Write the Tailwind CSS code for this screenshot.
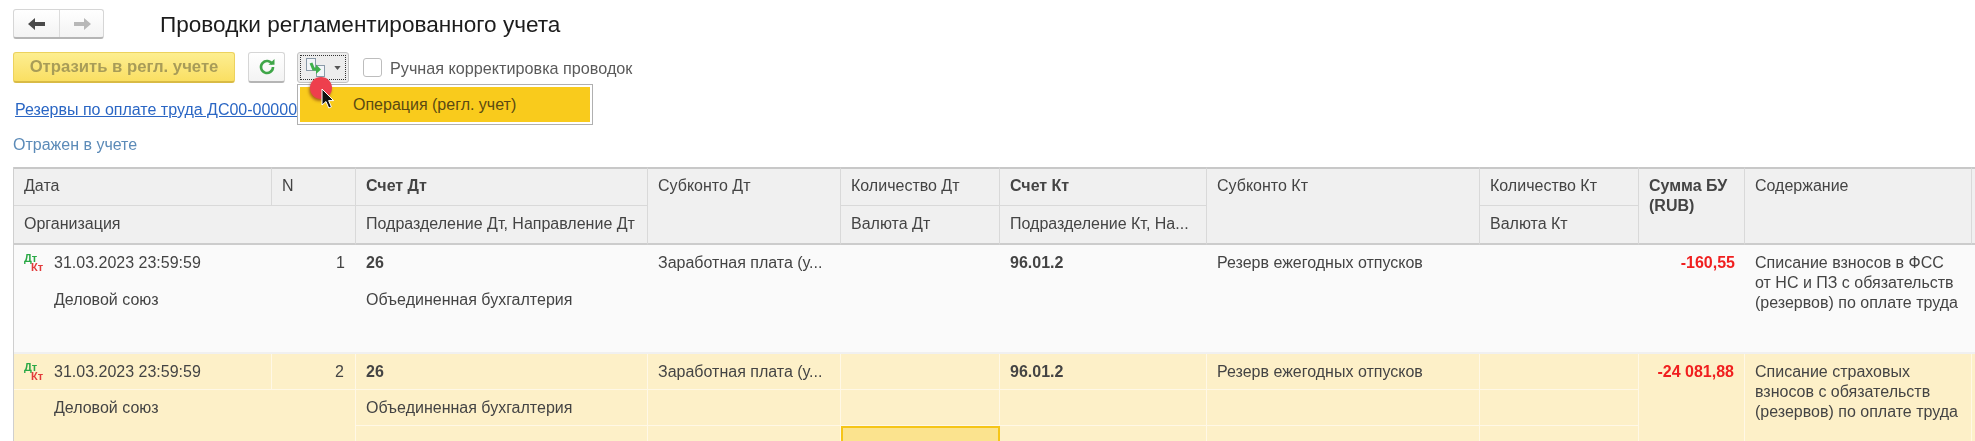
<!DOCTYPE html>
<html lang="ru"><head><meta charset="utf-8"><script src="https://cdn.jsdelivr.net/npm/@tailwindcss/browser@4"></script></head>
<body class="bg-white">
<div class="relative w-[1975px] h-[441px] overflow-hidden font-['Liberation_Sans',Arial,sans-serif] text-[16px] leading-[20px] text-[#444] blur-[0.5px]">
  <div class="flex items-center h-[30px] mt-[9px] ml-[13px]">
    <div class="flex w-[91px] h-[30px] rounded-[3px] border border-[#d6d6d6] border-b-2 border-b-[#b5b5b5] bg-gradient-to-b from-white to-[#f3f3f3]">
      <div class="w-[46px] flex items-center justify-center border-r border-[#dcdcdc]">
        <svg width="18" height="14" viewBox="0 0 18 14"><path d="M0 7l7-6v4h10v4H7v4z" fill="#4a4a4a"/></svg>
      </div>
      <div class="flex-1 flex items-center justify-center">
        <svg width="18" height="14" viewBox="0 0 18 14"><path d="M18 7l-7-6v4H1v4h10v4z" fill="#b8b8b8"/></svg>
      </div>
    </div>
    <div class="ml-[56px] mt-[2px] text-[22.6px] leading-[30px] text-[#1c1c1c] whitespace-nowrap">Проводки регламентированного учета</div>
  </div>
  <div class="flex items-center h-[31px] mt-[13px] ml-[13px]">
    <div class="w-[222px] h-[31px] rounded-[3px] border border-[#ecd25e] border-b-2 border-b-[#d9bb45] bg-gradient-to-b from-[#fdee90] to-[#fadf62] flex items-center justify-center font-bold text-[16.7px] text-[#a89c58] whitespace-nowrap">Отразить в регл. учете</div>
    <div class="ml-[13px] w-[37px] h-[31px] rounded-[3px] border border-[#d6d6d6] border-b-2 border-b-[#b5b5b5] bg-gradient-to-b from-white to-[#f3f3f3] flex items-center justify-center">
      <svg width="18" height="18" viewBox="0 0 18 18" fill="none"><path d="M14.3 6.2A6 6 0 1 0 15 9" stroke="#3fa648" stroke-width="2.6"/><path d="M10.5 6.8h6V1z" fill="#3fa648"/></svg>
    </div>
    <div class="ml-[12px] w-[52px] h-[31px] rounded-[3px] border border-[#c4c4c4] bg-[#ededed] p-[2px]">
      <div class="w-full h-full border border-dotted border-[#333] flex items-center pl-[4px] gap-[8px]">
        <svg width="21" height="19" viewBox="0 0 21 19" fill="none"><rect x="1.5" y="0.5" width="9" height="12" fill="#f2f5f8" stroke="#8a9aa8"/><rect x="11.5" y="7.5" width="8" height="11" fill="#f2f5f8" stroke="#8a9aa8"/><path d="M6 5l2.500 6h4" stroke="#3fb04a" stroke-width="3"/><path d="M11 6.500l5 5-5 4.500z" fill="#3fb04a"/></svg>
        <svg width="7" height="4" viewBox="0 0 8 5"><path d="M0 0h8L4 5z" fill="#555"/></svg>
      </div>
    </div>
    <div class="ml-[14px] w-[19px] h-[19px] rounded-[3px] border border-[#bdbdbd] bg-white"></div>
    <div class="ml-[8px] text-[16.2px] text-[#5a5a5a] whitespace-nowrap">Ручная корректировка проводок</div>
  </div>
  <div class="h-[19px] mt-[17px] ml-[15px] text-[16px] leading-[19px] text-[#2a66c4] underline whitespace-nowrap">Резервы по оплате труда ДС00-00000</div>
  <div class="h-[19px] mt-[16px] ml-[13px] text-[16px] leading-[19px] text-[#5c8bb8] whitespace-nowrap">Отражен в учете</div>

  <div class="mt-[13px] ml-[13px] border-l border-[#cfcfcf] grid grid-cols-[258px_84px_292px_193px_159px_207px_273px_159px_106px_227px_4px] grid-rows-[39px_39px_109px_36px_36px_20px] w-[1962px]">
    <!-- header -->
    <div class="bg-[#f0f0f0] border-t-2 border-t-[#c8c8c8] border-r border-b border-[#d9d9d9] px-[10px] pt-[7px]">Дата</div>
    <div class="bg-[#f0f0f0] border-t-2 border-t-[#c8c8c8] border-r border-b border-[#d9d9d9] px-[10px] pt-[7px]">N</div>
    <div class="bg-[#f0f0f0] border-t-2 border-t-[#c8c8c8] border-r border-b border-[#d9d9d9] px-[10px] pt-[7px] font-bold">Счет Дт</div>
    <div class="row-span-2 bg-[#f0f0f0] border-t-2 border-t-[#c8c8c8] border-r border-b-2 border-[#d9d9d9] border-b-[#cccccc] px-[10px] pt-[7px]">Субконто Дт</div>
    <div class="bg-[#f0f0f0] border-t-2 border-t-[#c8c8c8] border-r border-b border-[#d9d9d9] px-[10px] pt-[7px]">Количество Дт</div>
    <div class="bg-[#f0f0f0] border-t-2 border-t-[#c8c8c8] border-r border-b border-[#d9d9d9] px-[10px] pt-[7px] font-bold">Счет Кт</div>
    <div class="row-span-2 bg-[#f0f0f0] border-t-2 border-t-[#c8c8c8] border-r border-b-2 border-[#d9d9d9] border-b-[#cccccc] px-[10px] pt-[7px]">Субконто Кт</div>
    <div class="bg-[#f0f0f0] border-t-2 border-t-[#c8c8c8] border-r border-b border-[#d9d9d9] px-[10px] pt-[7px]">Количество Кт</div>
    <div class="row-span-2 bg-[#f0f0f0] border-t-2 border-t-[#c8c8c8] border-r border-b-2 border-[#d9d9d9] border-b-[#cccccc] px-[10px] pt-[7px] font-bold">Сумма БУ<br>(RUB)</div>
    <div class="row-span-2 bg-[#f0f0f0] border-t-2 border-t-[#c8c8c8] border-r border-b-2 border-[#d9d9d9] border-b-[#cccccc] px-[10px] pt-[7px]">Содержание</div>
    <div class="row-span-2 bg-[#f0f0f0] border-t-2 border-t-[#c8c8c8] border-b-2 border-b-[#cccccc]"></div>

    <div class="col-span-2 bg-[#f0f0f0] border-r border-b-2 border-[#d9d9d9] border-b-[#cccccc] px-[10px] pt-[8px]">Организация</div>
    <div class="bg-[#f0f0f0] border-r border-b-2 border-[#d9d9d9] border-b-[#cccccc] px-[10px] pt-[8px] whitespace-nowrap">Подразделение Дт, Направление Дт</div>
    <div class="bg-[#f0f0f0] border-r border-b-2 border-[#d9d9d9] border-b-[#cccccc] px-[10px] pt-[8px]">Валюта Дт</div>
    <div class="bg-[#f0f0f0] border-r border-b-2 border-[#d9d9d9] border-b-[#cccccc] px-[10px] pt-[8px] whitespace-nowrap">Подразделение Кт, На...</div>
    <div class="bg-[#f0f0f0] border-r border-b-2 border-[#d9d9d9] border-b-[#cccccc] px-[10px] pt-[8px]">Валюта Кт</div>

    <!-- row 1 -->
    <div class="col-span-2 bg-[#fafafa] border-b-2 border-b-[#f0f0f0] pl-[10px] pr-[11px] pt-[8px]">
      <div class="flex items-start">
        <div class="relative w-[20px] h-[20px] shrink-0 font-bold text-[11px] leading-[11px]"><span class="absolute left-0 top-0 text-[#2aa845]">Дт</span><span class="absolute left-[7px] top-[9px] text-[#e23a3a]">Кт</span></div>
        <span class="ml-[10px]">31.03.2023 23:59:59</span>
        <span class="ml-auto">1</span>
      </div>
      <div class="ml-[30px] mt-[17px]">Деловой союз</div>
    </div>
    <div class="bg-[#fafafa] border-b-2 border-b-[#f0f0f0] px-[10px] pt-[8px]">
      <div class="font-bold">26</div>
      <div class="mt-[17px]">Объединенная бухгалтерия</div>
    </div>
    <div class="bg-[#fafafa] border-b-2 border-b-[#f0f0f0] px-[10px] pt-[8px] whitespace-nowrap">Заработная плата (у...</div>
    <div class="bg-[#fafafa] border-b-2 border-b-[#f0f0f0]"></div>
    <div class="bg-[#fafafa] border-b-2 border-b-[#f0f0f0] px-[10px] pt-[8px] font-bold">96.01.2</div>
    <div class="bg-[#fafafa] border-b-2 border-b-[#f0f0f0] px-[10px] pt-[8px] whitespace-nowrap">Резерв ежегодных отпусков</div>
    <div class="bg-[#fafafa] border-b-2 border-b-[#f0f0f0]"></div>
    <div class="bg-[#fafafa] border-b-2 border-b-[#f0f0f0] px-[10px] pt-[8px] text-right font-bold text-[#f01f1f]">-160,55</div>
    <div class="bg-[#fafafa] border-b-2 border-b-[#f0f0f0] px-[10px] pt-[8px] whitespace-nowrap">Списание взносов в ФСС<br>от НС и ПЗ с обязательств<br>(резервов) по оплате труда</div>
    <div class="bg-[#fafafa] border-b-2 border-b-[#f0f0f0]"></div>

    <!-- row 2 -->
    <div class="bg-[#fdf0c8] border-r border-b border-[#fff8e6] pl-[10px] pt-[8px]">
      <div class="flex items-start">
        <div class="relative w-[20px] h-[20px] shrink-0 font-bold text-[11px] leading-[11px]"><span class="absolute left-0 top-0 text-[#2aa845]">Дт</span><span class="absolute left-[7px] top-[9px] text-[#e23a3a]">Кт</span></div>
        <span class="ml-[10px] whitespace-nowrap">31.03.2023 23:59:59</span>
      </div>
    </div>
    <div class="bg-[#fdf0c8] border-r border-b border-[#fff8e6] pr-[11px] pt-[8px] text-right">2</div>
    <div class="bg-[#fdf0c8] border-r border-b border-[#fff8e6] px-[10px] pt-[8px] font-bold">26</div>
    <div class="bg-[#fdf0c8] border-r border-b border-[#fff8e6] px-[10px] pt-[8px] whitespace-nowrap">Заработная плата (у...</div>
    <div class="bg-[#fdf0c8] border-r border-b border-[#fff8e6]"></div>
    <div class="bg-[#fdf0c8] border-r border-b border-[#fff8e6] px-[10px] pt-[8px] font-bold">96.01.2</div>
    <div class="bg-[#fdf0c8] border-r border-b border-[#fff8e6] px-[10px] pt-[8px] whitespace-nowrap">Резерв ежегодных отпусков</div>
    <div class="bg-[#fdf0c8] border-r border-b border-[#fff8e6]"></div>
    <div class="row-span-3 bg-[#fdf0c8] border-r border-[#fff8e6] px-[10px] pt-[8px] text-right font-bold text-[#f01f1f]">-24 081,88</div>
    <div class="row-span-3 bg-[#fdf0c8] border-r border-[#fff8e6] px-[10px] pt-[8px] whitespace-nowrap">Списание страховых<br>взносов с обязательств<br>(резервов) по оплате труда</div>
    <div class="row-span-3 bg-[#fdf0c8]"></div>

    <div class="row-span-2 col-span-2 bg-[#fdf0c8] border-r border-[#fff8e6] pl-[40px] pt-[8px]">Деловой союз</div>
    <div class="bg-[#fdf0c8] border-r border-b border-[#fff8e6] px-[10px] pt-[8px] whitespace-nowrap">Объединенная бухгалтерия</div>
    <div class="bg-[#fdf0c8] border-r border-b border-[#fff8e6]"></div>
    <div class="bg-[#fdf0c8] border-r border-b border-[#fff8e6]"></div>
    <div class="bg-[#fdf0c8] border-r border-b border-[#fff8e6]"></div>
    <div class="bg-[#fdf0c8] border-r border-b border-[#fff8e6]"></div>
    <div class="bg-[#fdf0c8] border-r border-b border-[#fff8e6]"></div>

    <div class="bg-[#fdf0c8] border-r border-[#fff8e6]"></div>
    <div class="bg-[#fdf0c8] border-r border-[#fff8e6]"></div>
    <div class="bg-[#fbe38e] border-2 border-[#f5c518]"></div>
    <div class="bg-[#fdf0c8] border-r border-[#fff8e6]"></div>
    <div class="bg-[#fdf0c8] border-r border-[#fff8e6]"></div>
    <div class="bg-[#fdf0c8] border-r border-[#fff8e6]"></div>
  </div>

  <!-- dropdown overlay -->
  <div class="absolute left-[297px] top-[84px] w-[296px] h-[41px] border border-[#b0b0b0] bg-white p-[2px]">
    <div class="w-full h-full bg-[#f9cb1c] pl-[53px] flex items-center text-[16px] text-[#5b4a12] whitespace-nowrap">Операция (регл. учет)</div>
  </div>
  <div class="absolute left-[310px] top-[77px] w-[22px] h-[22px] rounded-full bg-[#ee3f4d] shadow-[-1px_2px_3px_rgba(120,40,20,0.6)]"></div>
  <svg class="absolute left-[320px] top-[88px]" width="16" height="22" viewBox="0 0 16 22"><path d="M2 1l0 16 4-3.5 2.8 6.5 2.6-1.1-2.8-6.3h5z" fill="#111" stroke="#fff" stroke-width="1"/></svg>
</div>
</body></html>
